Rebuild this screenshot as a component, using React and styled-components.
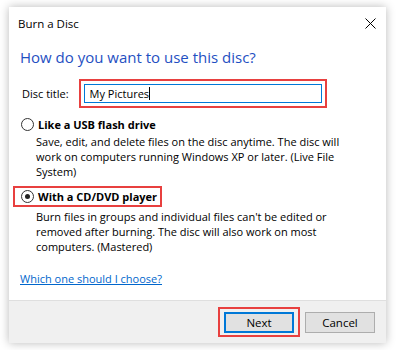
import React from "react";
import styled, { createGlobalStyle } from "styled-components";

const GlobalStyle = createGlobalStyle`
  html, body {
    margin: 0;
    padding: 0;
    background: #ffffff;
  }
  body {
    font-family: "Open Sans", "Noto Sans", sans-serif;
    font-size: 11px;
    color: #000;
  }
`;

const Page = styled.div`
  padding: 7px 0 0 9px;
  width: 396px;
  height: 350px;
  box-sizing: border-box;
`;

const Window = styled.div`
  width: 377px;
  height: 336px;
  background: #ffffff;
  box-shadow: 0 0 9px rgba(0, 0, 0, 0.28);
  display: flex;
  flex-direction: column;
`;

const TitleBar = styled.div`
  height: 32px;
  display: flex;
  align-items: center;
  justify-content: space-between;
  padding: 0 10px 0 9px;
  font-size: 11.5px;
`;

const Content = styled.div`
  flex: 1;
  padding: 8px 11px 0 11px;
  display: flex;
  flex-direction: column;
`;

const Heading = styled.div`
  font-size: 15px;
  line-height: 21px;
  color: #1f50c2;
  margin-bottom: 11px;
`;

const Highlight = styled.div`
  border: 2px solid #e8403f;
  padding: ${(p) => p.$pad || "3px"};
  display: inline-flex;
  align-items: center;
`;

const TitleRow = styled.div`
  display: flex;
  align-items: center;
  gap: 10px;
  padding-left: 2px;
`;

const Input = styled.div`
  height: 17px;
  width: 231px;
  border: 1px solid #0078d7;
  display: flex;
  align-items: center;
  padding-left: 5px;
  box-sizing: content-box;
`;

const Caret = styled.span`
  display: inline-block;
  width: 1px;
  height: 13px;
  background: #000;
`;

const Option = styled.div`
  display: flex;
  flex-direction: column;
  margin-top: ${(p) => p.$top || "0"};
`;

const RadioRow = styled.div`
  display: flex;
  align-items: center;
  gap: 4px;
  line-height: 15px;
  font-weight: 700;
  padding-left: ${(p) => p.$indent || "0"};
`;

const RadioCircle = styled.span`
  width: 11px;
  height: 11px;
  border: 1px solid #333;
  border-radius: 50%;
  display: inline-flex;
  align-items: center;
  justify-content: center;
  background: #fff;
  &::after {
    content: "";
    width: 5px;
    height: 5px;
    border-radius: 50%;
    background: ${(p) => (p.$checked ? "#222" : "transparent")};
  }
`;

const RadioHighlight = styled(Highlight)`
  align-self: flex-start;
  margin-left: -7px;
`;

const Desc = styled.div`
  padding-left: 16px;
  line-height: 15px;
  white-space: nowrap;
  margin-top: 2px;
`;

const Link = styled.a`
  color: #0066cc;
  text-decoration: underline;
  margin-top: ${(p) => p.$top || "0"};
  line-height: 15px;
  align-self: flex-start;
  cursor: pointer;
`;

const Footer = styled.div`
  height: 43px;
  border-top: 1px solid #dfdfdf;
  background: #f0f0f0;
  display: flex;
  align-items: center;
  justify-content: flex-end;
  gap: 5px;
  padding-right: 11px;
  box-sizing: border-box;
`;

const Button = styled.button`
  width: 70px;
  height: 21px;
  box-sizing: border-box;
  background: #e1e1e1;
  border: ${(p) => (p.$focused ? "2px solid #0078d7" : "1px solid #adadad")};
  font-family: inherit;
  font-size: 11.5px;
  color: #000;
  padding: 0;
  margin: 0;
`;

const CloseIcon = () => (
  <svg width="11" height="11" viewBox="0 0 11 11">
    <path d="M0.5 0.5 L10.5 10.5 M10.5 0.5 L0.5 10.5" stroke="#000" strokeWidth="1" />
  </svg>
);

export default function App() {
  return (
    <>
      <GlobalStyle />
      <Page>
        <Window>
          <TitleBar>
            <span>Burn a Disc</span>
            <CloseIcon />
          </TitleBar>
          <Content>
            <Heading>How do you want to use this disc?</Heading>
            <TitleRow>
              <span>Disc title:</span>
              <Highlight>
                <Input>
                  My Pictures<Caret />
                </Input>
              </Highlight>
            </TitleRow>
            <Option $top="9px">
              <RadioRow $indent="1px">
                <RadioCircle />
                Like a USB flash drive
              </RadioRow>
              <Desc>
                Save, edit, and delete files on the disc anytime. The disc will
                <br />
                work on computers running Windows XP or later. (Live File
                <br />
                System)
              </Desc>
            </Option>
            <Option $top="7px">
              <RadioHighlight $pad="1px 3px 1px 6px">
                <RadioRow>
                  <RadioCircle $checked />
                  With a CD/DVD player
                </RadioRow>
              </RadioHighlight>
              <Desc>
                Burn files in groups and individual files can't be edited or
                <br />
                removed after burning. The disc will also work on most
                <br />
                computers. (Mastered)
              </Desc>
            </Option>
            <Link $top="17px">Which one should I choose?</Link>
          </Content>
          <Footer>
            <Highlight $pad="3px 4px 2px 4px">
              <Button $focused>Next</Button>
            </Highlight>
            <Button>Cancel</Button>
          </Footer>
        </Window>
      </Page>
    </>
  );
}
